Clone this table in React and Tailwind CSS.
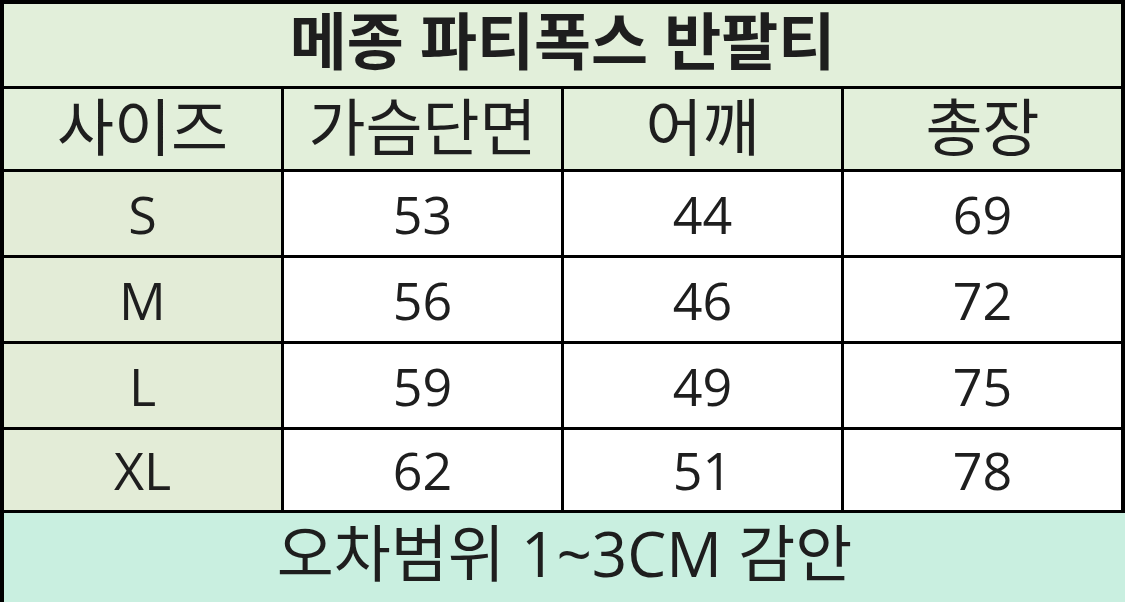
import React from "react";

const rows = [
  ["S", "53", "44", "69"],
  ["M", "56", "46", "72"],
  ["L", "59", "49", "75"],
  ["XL", "62", "51", "78"],
];

const font = { fontFamily: '"Open Sans", "Noto Sans CJK KR", sans-serif' };

export default function App() {
  return (
    <div className="w-[1125px] h-[602px] bg-white text-[#1e1e1e] overflow-hidden" style={font}>
      <div className="bg-black pt-[4px] pl-[4px] pr-[4px]">
        <div className="grid grid-cols-4 grid-rows-[82px_80px_83px_83px_83px_80px] gap-[3px]">
          <div className="col-span-4 bg-[#e2efda] flex items-center justify-center pb-[8px] text-[62px] font-bold leading-none">
            메종 파티폭스 반팔티
          </div>
          {["사이즈", "가슴단면", "어깨", "총장"].map((h) => (
            <div key={h} className="bg-[#e2efda] flex items-center justify-center pb-[4px] text-[62px] leading-none">
              {h}
            </div>
          ))}
          {rows.map((r) => (
            <React.Fragment key={r[0]}>
              <div className="bg-[#e3ecd7] flex items-center justify-center text-[52px] leading-none">
                {r[0]}
              </div>
              {r.slice(1).map((v, i) => (
                <div key={i} className="bg-white flex items-center justify-center text-[52px] leading-none">
                  {v}
                </div>
              ))}
            </React.Fragment>
          ))}
        </div>
        <div className="h-[4px]" />
      </div>
      <div className="-mt-[1px] h-[90px] border-l-[4px] border-black bg-[#c9efe0] flex items-center justify-center pb-[10px] text-[62px] leading-none">
        오차범위 1~3CM 감안
      </div>
    </div>
  );
}
